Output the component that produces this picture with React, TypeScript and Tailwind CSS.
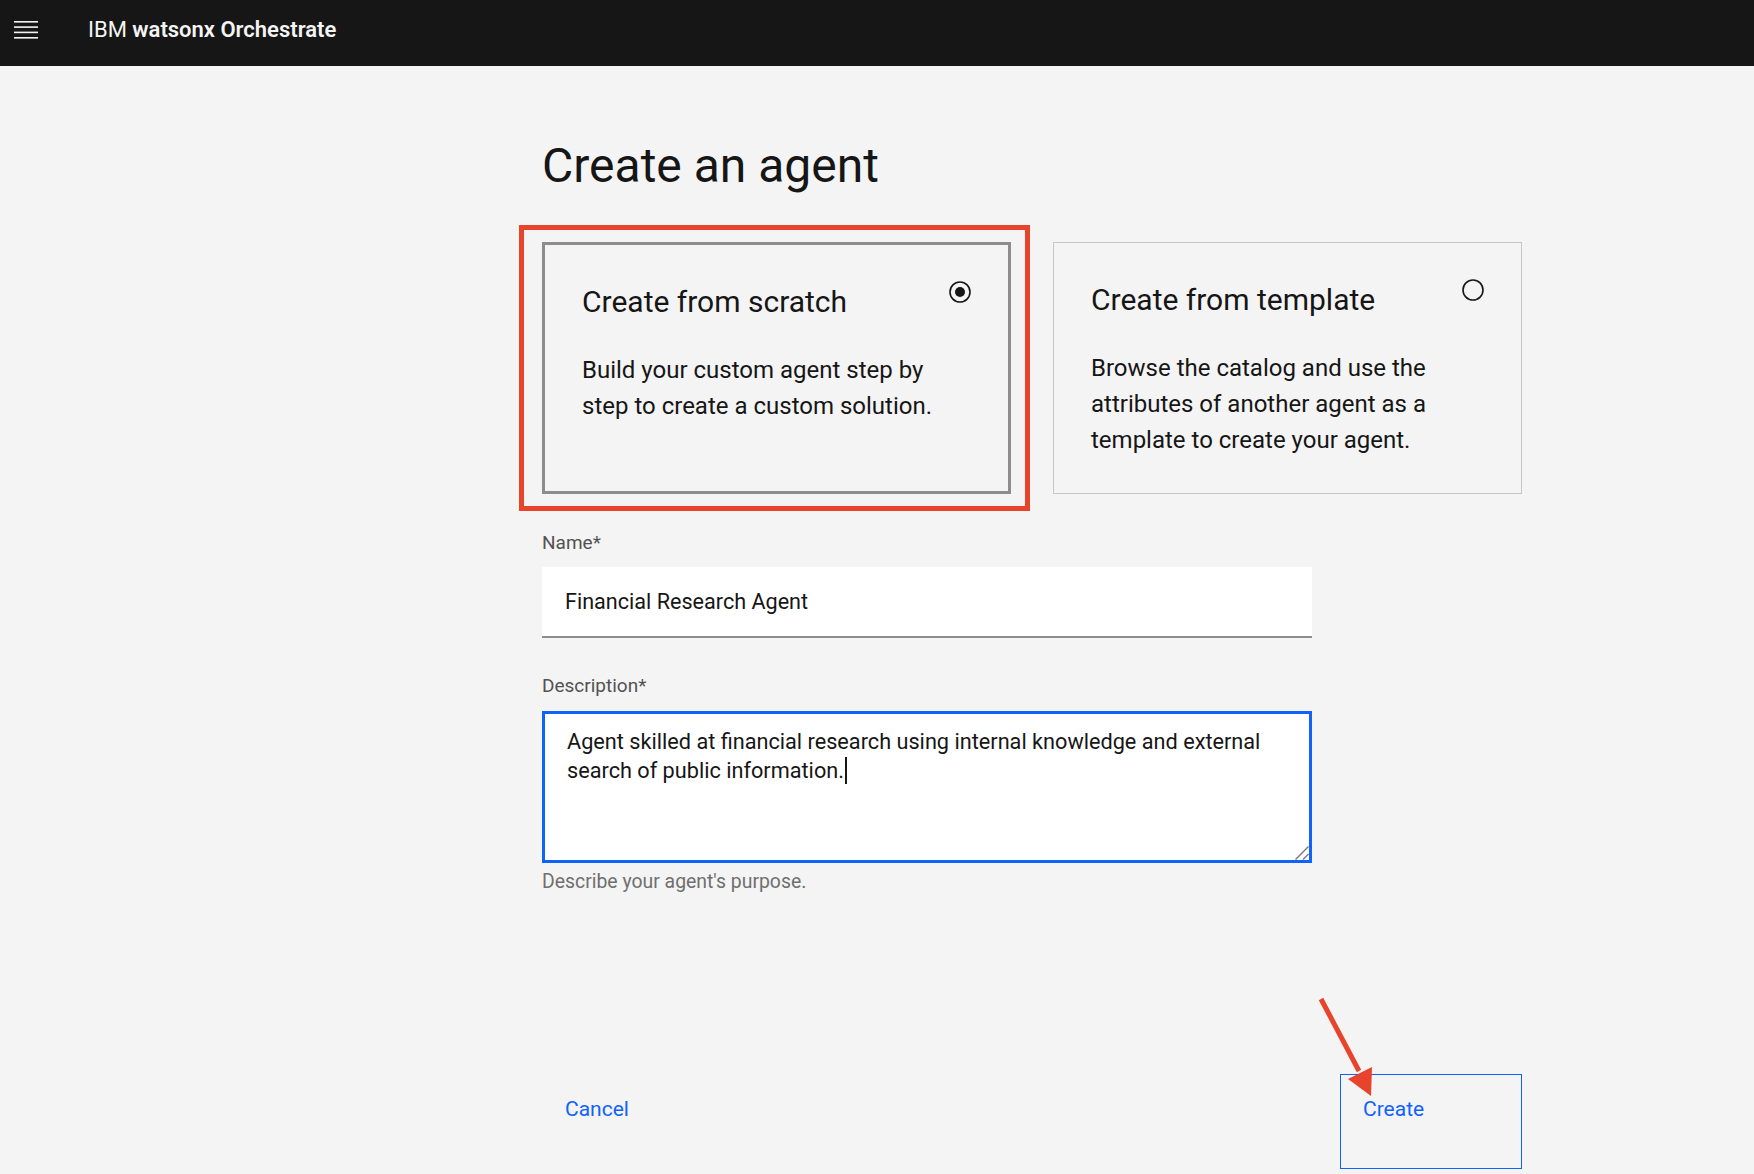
import React from "react";

function MenuIcon() {
  return (
    <svg width="24" height="20" viewBox="0 0 24 20" className="mt-[20px]" aria-hidden="true">
      <rect x="0" y="1" width="24" height="1.6" fill="#f4f4f4" />
      <rect x="0" y="6.3" width="24" height="1.6" fill="#f4f4f4" />
      <rect x="0" y="11.6" width="24" height="1.6" fill="#f4f4f4" />
      <rect x="0" y="17" width="24" height="1.6" fill="#f4f4f4" />
    </svg>
  );
}

function Radio({ checked }: { checked: boolean }) {
  return (
    <svg width="22" height="22" viewBox="0 0 22 22" className="shrink-0 mt-[-1px]" aria-hidden="true">
      <circle cx="11" cy="11" r="10" fill="none" stroke="#161616" strokeWidth="1.6" />
      {checked && <circle cx="11" cy="11" r="5" fill="#161616" />}
    </svg>
  );
}

interface OptionCardProps {
  title: string;
  body: string[];
  checked: boolean;
}

function OptionCard({ title, body, checked }: OptionCardProps) {
  return (
    <div
      className={
        checked
          ? "relative h-[252px] border-[3px] border-[#8d8d8d] p-[37px]"
          : "relative h-[252px] border border-[#c6c6c6] p-[37px]"
      }
    >
      <div className="flex items-start justify-between">
        <h2 className="text-[30px] leading-[40px] text-[#161616]">{title}</h2>
        <Radio checked={checked} />
      </div>
      <p className="mt-[30px] text-[24px] leading-[36px] text-[#161616]">
        {body.map((line) => (
          <span key={line} className="block">
            {line}
          </span>
        ))}
      </p>
      {checked && (
        <div className="pointer-events-none absolute -top-[20px] -bottom-[20px] -left-[26px] -right-[22px] border-[5px] border-[#e8432b]"></div>
      )}
    </div>
  );
}

export default function App() {
  return (
    <div className="min-h-[1174px] bg-[#f4f4f4] font-['Roboto','Liberation_Sans',sans-serif] text-[#161616]">
      <header className="flex h-[66px] items-start bg-[#161616] pl-[14px]">
        <MenuIcon />
        <div className="ml-[50px] pt-[15px] text-[22px] leading-[30px] text-[#f4f4f4]">
          IBM <span className="font-semibold">watsonx Orchestrate</span>
        </div>
      </header>

      <main className="pl-[542px] pt-[72px]">
        <div className="w-[980px]">
          <h1 className="text-[48px] leading-[56px] font-normal">Create an agent</h1>

          <div className="mt-[48px] grid grid-cols-[469px_469px] gap-[42px]">
            <OptionCard
              title="Create from scratch"
              body={["Build your custom agent step by", "step to create a custom solution."]}
              checked
            />
            <OptionCard
              title="Create from template"
              body={[
                "Browse the catalog and use the",
                "attributes of another agent as a",
                "template to create your agent.",
              ]}
              checked={false}
            />
          </div>

          <div className="w-[770px]">
            <label className="mt-[37px] block text-[19px] leading-[24px] text-[#525252]">Name*</label>
            <div className="mt-[12px] flex h-[71px] items-center border-b-2 border-[#8d8d8d] bg-white px-[23px] text-[21.6px] leading-[29px]">
              Financial Research Agent
            </div>

            <label className="mt-[36px] block text-[19px] leading-[24px] text-[#525252]">Description*</label>
            <div className="relative mt-[13px] h-[152px] border-[3px] border-[#0f62fe] bg-white pl-[22px] pr-[22px] pt-[13px] text-[21.7px] leading-[29px]">
              Agent skilled at financial research using internal knowledge and external search of public
              information.
              <span className="ml-[1px] inline-block h-[27px] w-[2px] bg-[#161616] align-[-6px]"></span>
              <svg width="14" height="14" viewBox="0 0 14 14" className="absolute bottom-0 right-0" aria-hidden="true">
                <line x1="0.5" y1="13.5" x2="13.5" y2="0.5" stroke="#7a7a7a" strokeWidth="1.4" />
                <line x1="8" y1="13.5" x2="13.5" y2="8" stroke="#7a7a7a" strokeWidth="1.4" />
              </svg>
            </div>
            <p className="mt-[7px] text-[19.4px] leading-[24px] text-[#6f6f6f]">Describe your agent's purpose.</p>
          </div>

          <div className="mt-[180px] flex justify-between">
            <button className="flex h-[95px] w-[182px] items-start border border-transparent pl-[22px] pt-[20px] text-[21px] leading-[29px] text-[#0f62fe]">
              Cancel
            </button>
            <button className="relative flex h-[95px] w-[182px] items-start border border-[#0f62fe] pl-[22px] pt-[20px] text-[21px] leading-[29px] text-[#0f62fe]">
              Create
              <svg
                width="80"
                height="120"
                viewBox="0 0 80 120"
                className="pointer-events-none absolute -left-[31px] -top-[86px]"
                aria-hidden="true"
              >
                <line x1="11" y1="10" x2="49" y2="82" stroke="#e8432b" strokeWidth="5" strokeLinecap="butt" />
                <polygon points="38,90 62,78 61,107" fill="#e8432b" />
              </svg>
            </button>
          </div>
        </div>
      </main>
    </div>
  );
}
